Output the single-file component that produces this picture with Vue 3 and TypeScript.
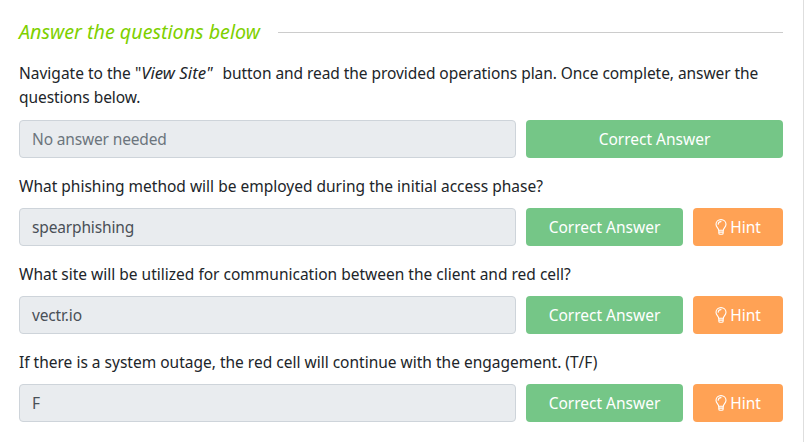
<script setup lang="ts">
interface Question {
  text: string
  answer: string
}
const questions: Question[] = [
  { text: 'What phishing method will be employed during the initial access phase?', answer: 'spearphishing' },
  { text: 'What site will be utilized for communication between the client and red cell?', answer: 'vectr.io' },
  { text: 'If there is a system outage, the red cell will continue with the engagement. (T/F)', answer: 'F' },
]
</script>

<template>
  <main class="page">
    <header class="heading">
      <h2 class="title">Answer the questions below</h2>
      <span class="rule"></span>
    </header>
    <p class="intro">Navigate to the "<em class="site">View Site"</em> <span class="rest">button and read the provided operations plan. Once complete, answer the questions below.</span></p>
    <div class="row first">
      <div class="field muted">No answer needed</div>
      <button class="btn correct wide">Correct Answer</button>
    </div>
    <section v-for="q in questions" :key="q.text" class="question">
      <p class="q-text">{{ q.text }}</p>
      <div class="row">
        <div class="field">{{ q.answer }}</div>
        <button class="btn correct">Correct Answer</button>
        <button class="btn hint">
          <svg class="bulb" viewBox="0 0 12 16" width="12" height="16" fill="none" stroke="currentColor" stroke-width="1.1" stroke-linecap="round" stroke-linejoin="round">
            <path d="M3.7 11.2c0-1.9-2.7-3-2.7-5.9A5 4.8 0 0 1 6 .6a5 4.8 0 0 1 5 4.7c0 2.9-2.7 4-2.7 5.9z" />
            <path d="M3.8 11.3v2.6c0 .7.6 1.3 1.2 1.3h2c.6 0 1.2-.6 1.2-1.3v-2.6M3.9 13.1h4.2" />
            <path d="M3.2 5.2A2.8 2.8 0 0 1 6 2.6" />
          </svg>
          <span>Hint</span>
        </button>
      </div>
    </section>
  </main>
</template>

<style>
html, body { margin: 0; background: #fff; }
</style>

<style scoped>
.page {
  width: 804px;
  height: 442px;
  box-sizing: border-box;
  padding: 20px 20px 0 19px;
  border-right: 1px solid #dedede;
  font-family: "Noto Sans", "Open Sans", sans-serif;
  font-size: 15.5px;
  line-height: 24px;
  color: #212529;
  overflow: hidden;
}
.heading { display: flex; align-items: center; gap: 18px; height: 24px; }
.title {
  margin: 0;
  font-size: 19.7px;
  font-style: italic;
  font-weight: 400;
  color: #7ed000;
  white-space: nowrap;
}
.rule { flex: 1; height: 1px; background: #ccc; }
.intro { margin: 17px 0 0; }
.site { font-size: 16.8px; line-height: 1; margin-right: 6px; }
.rest { letter-spacing: -0.06px; }
.row { display: flex; gap: 10px; margin-top: 10px; }
.row.first { margin-top: 11px; }
.field {
  flex: 1;
  height: 38px;
  box-sizing: border-box;
  padding: 0 12px;
  line-height: 36px;
  letter-spacing: -0.15px;
  border: 1px solid #ced4da;
  border-radius: 4px;
  background: #e9ecef;
  color: #495057;
}
.field.muted { color: #6c757d; }
.btn {
  width: 157px;
  height: 38px;
  border: 0;
  border-radius: 4px;
  padding: 0;
  color: #fff;
  font: inherit;
  display: flex;
  align-items: center;
  justify-content: center;
}
.correct { background: #75c687; }
.wide { width: 257px; }
.hint { width: 90px; background: #ffa255; gap: 3px; }
.bulb { flex: none; }
.question { margin-top: 16px; }
.q-text { margin: 0; }
</style>
